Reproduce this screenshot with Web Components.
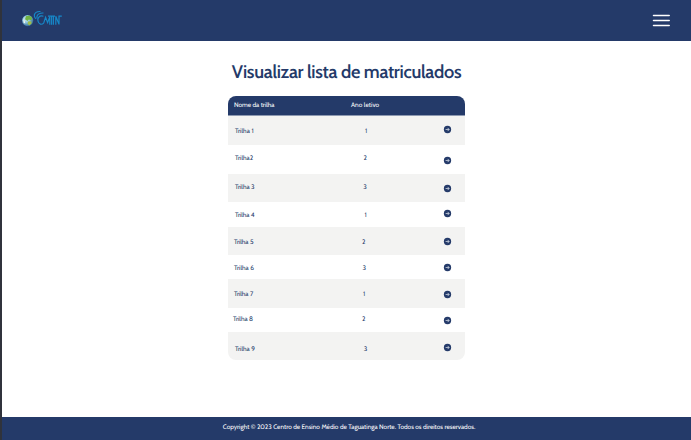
<!DOCTYPE html>
<html lang="pt-BR">
<head>
<meta charset="utf-8">
<title>Visualizar lista de matriculados</title>
<style>
html,body{margin:0;height:100%;overflow:hidden}
body{font-family:Cabin,Lato,"Open Sans",sans-serif;color:#243a69;background:#fff;text-rendering:geometricPrecision}
</style>
</head>
<body>
<app-page></app-page>
<script>
// One line of text whose letter spacing is adjusted to fill a given width.
class FitText extends HTMLElement {
  connectedCallback() {
    const root = this.attachShadow({mode:'open'});
    root.innerHTML = `<style>:host{display:block;white-space:nowrap;width:max-content}span{display:inline-block}</style><span><slot></slot></span>`;
    const span = root.querySelector('span');
    const want = parseFloat(this.getAttribute('width'));
    const n = this.textContent.length;
    if (want) {
      const have = span.getBoundingClientRect().width;
      span.style.letterSpacing = ((want - have) / n).toFixed(3) + 'px';
    }
  }
}

class SchoolLogo extends HTMLElement {
  connectedCallback() {
    this.attachShadow({mode:'open'}).innerHTML = `
<style>:host{display:block;width:42px;height:18px}svg{display:block}</style>
<svg width="42" height="18" viewBox="0 0 42 18" fill="none">
  <defs><radialGradient id="g" cx=".38" cy=".35" r=".7"><stop offset="0" stop-color="#e4f4fa"/><stop offset=".45" stop-color="#8cc5de"/><stop offset="1" stop-color="#285f91"/></radialGradient></defs>
  <circle cx="6.7" cy="10.6" r="5.6" fill="url(#g)"/>
  <path d="M4.9 6.3 8.1 5.4 11.1 7.5 10.5 10.4 7.9 9.5 6.4 11 4 9.3Z" fill="#72b344"/>
  <path d="M6.9 11.6 10.2 11.3 10.7 13.2 8.4 15.4 6.7 13.9Z" fill="#a0bd48"/>
  <path d="M2.1 8.4 3.7 10.8 4.3 13.6 2.7 13Z" fill="#f0f6ee"/>
  <g stroke="#1688c9" stroke-width="1.15">
    <path d="M19.5 1.5Q14.2 1.2 13.3 5Q13.1 7 14.8 8.8"/>
    <path d="M22.5 3Q17.2 2.7 16 6.2Q15.7 7.6 16.3 8.6"/>
    <path d="M22.4 6.2C18.4 5 16.2 8 17 11.2C17.8 14.2 20.6 15.4 22.8 12.8L24.6 7.2 26.6 12.6 28.8 6.8V14.8"/>
    <path d="M27 6.1H34M30.6 6V14.8M32.4 6V14.8"/>
    <path d="M34.8 14.8V6.2L38 14.4V6.1H40.8"/>
  </g>
</svg>`;
  }
}

class MenuButton extends HTMLElement {
  connectedCallback() {
    this.attachShadow({mode:'open'}).innerHTML = `
<style>:host{display:block;width:18px;height:14px}svg{display:block}</style>
<svg width="18" height="14" viewBox="0 0 18 14"><path d="M1.5 2.4H17.2M1.5 7.4H17.2M1.5 12.4H17.2" stroke="#fff" stroke-width="1.5" stroke-linecap="round"/></svg>`;
  }
}

class ArrowIcon extends HTMLElement {
  connectedCallback() {
    this.attachShadow({mode:'open'}).innerHTML = `
<style>:host{display:block;width:7px;height:7px}svg{display:block;overflow:visible}</style>
<svg width="7" height="7" viewBox="0 0 14 14"><circle cx="7" cy="7" r="7.3" fill="#243a69"/><path d="M3.2 7H10M7.2 3.8 10.4 7 7.2 10.2" fill="none" stroke="#e3e8f1" stroke-width="1.4"/></svg>`;
  }
}

class TrackRow extends HTMLElement {
  connectedCallback() {
    const d = k => this.dataset[k];
    this.attachShadow({mode:'open'}).innerHTML = `
<style>
:host{display:grid;grid-template-columns:115px 101px 1fr;align-items:start;box-sizing:border-box;height:${d('h')}px;font-size:6.5px;line-height:8px}
:host([shaded]){background:#f3f3f2}
.name{padding:${d('ty')}px 0 0 ${d('nx')}px}
.year{padding:${d('ty')}px 0 0 ${d('yx')}px}
.go{padding:${d('iy')}px 0 0 0}
</style>
<div class="name"><fit-text width="${d('w')}">${d('name')}</fit-text></div>
<div class="year">${d('year')}</div>
<div class="go"><arrow-icon></arrow-icon></div>`;
  }
}

class TrackTable extends HTMLElement {
  connectedCallback() {
    // name, year, row height, text top, name left, name width, year left, icon top
    const rows = [
      ['Trilha 1',1,29,11,7,18.6,22,10],
      ['Trilha2',2,29,9,7,18.2,20.5,12],
      ['Trilha 3',3,28,9,7,19.6,20.2,11],
      ['Trilha 4',1,25,9,7,19.6,21.4,8],
      ['Trilha 5',2,28,11,6,19.4,19,11],
      ['Trilha 6',3,24,9,6,20,19.6,9],
      ['Trilha 7',1,28.5,11,6,19.2,20,12],
      ['Trilha 8',2,24.5,7.5,5,20,19,9.5],
      ['Trilha 9',3,28,13,7,20,20.8,12]];
    this.attachShadow({mode:'open'}).innerHTML = `
<style>
:host{display:block;width:237px;border-radius:8px;overflow:hidden}
header{display:grid;grid-template-columns:123px 1fr;padding:5px 0 0 6px;height:20px;box-sizing:border-box;background:linear-gradient(#243a69 19px,#8d99b1 19px);color:#fff;font-size:6.5px;line-height:8px}
</style>
<header><fit-text width="40.4">Nome da trilha</fit-text><fit-text width="28.2">Ano letivo</fit-text></header>
${rows.map((r,i)=>`<track-row ${i%2?'':'shaded'} data-name="${r[0]}" data-year="${r[1]}" data-h="${r[2]}" data-ty="${r[3]}" data-nx="${r[4]}" data-w="${r[5]}" data-yx="${r[6]}" data-iy="${r[7]}"></track-row>`).join('')}`;
    this.shadowRoot.querySelector('header').style.gridTemplateColumns = '117px 1fr';
  }
}

class AppPage extends HTMLElement {
  connectedCallback() {
    this.attachShadow({mode:'open'}).innerHTML = `
<style>
:host{display:flex;flex-direction:column;box-sizing:border-box;width:691px;height:440px;border-left:2px solid #30333c}
.top{flex:none;height:41px;box-sizing:border-box;background:#243a69;display:flex;justify-content:space-between;align-items:flex-start;padding:10px 21px 0 19px}
menu-button{margin-top:3px}
main{flex:1;min-height:0;display:flex;flex-direction:column;align-items:center}
h1{margin:19px 0 0 0;font-size:18.2px;line-height:24px;font-weight:600}
track-table{margin:12px 0 0 0}
footer{flex:none;height:23px;box-sizing:border-box;padding-top:6px;background:#243a69;color:#fff;display:flex;justify-content:center;font-size:6.5px;line-height:8px}
</style>
<div class="top"><school-logo></school-logo><menu-button></menu-button></div>
<main><h1><fit-text width="229.5">Visualizar lista de matriculados</fit-text></h1><track-table></track-table></main>
<footer><fit-text width="252.5" style="margin-left:5px">Copyright © 2023 Centro de Ensino Médio de Taguatinga Norte. Todos os direitos reservados.</fit-text></footer>`;
  }
}
customElements.define('fit-text', FitText);
customElements.define('school-logo', SchoolLogo);
customElements.define('menu-button', MenuButton);
customElements.define('arrow-icon', ArrowIcon);
customElements.define('track-row', TrackRow);
customElements.define('track-table', TrackTable);
customElements.define('app-page', AppPage);
</script>
</body>
</html>
